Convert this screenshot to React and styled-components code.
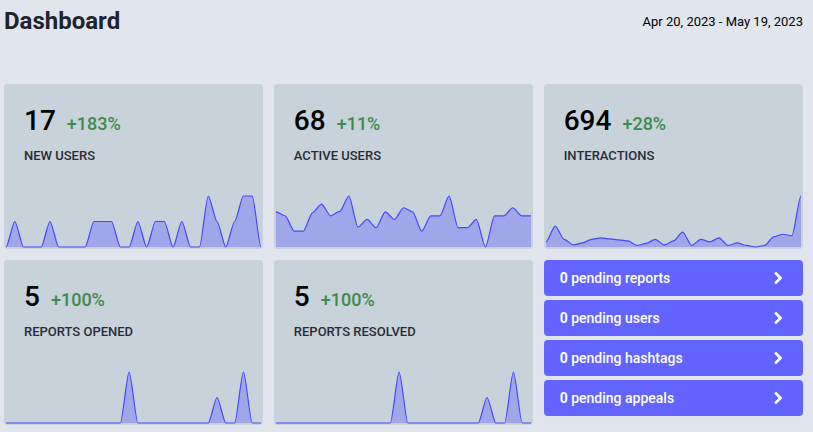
import React from 'react'
import styled, { createGlobalStyle } from 'styled-components'

const GlobalStyle = createGlobalStyle`
  body {
    margin: 0;
    background: #e1e6ee;
    font-family: Roboto, "Liberation Sans", sans-serif;
  }
`;

const counters = [
  {
    total: '17', change: '+183%', label: 'New users',
    data: [0,1,0,0,0,1,0,0,0,0,1,1,1,0,0,1,0,1,1,0,1,0,0,2,1,0,1,2,2,0],
  },
  {
    total: '68', change: '+11%', label: 'Active users',
    data: [69,61,31,31,67,84,61,70,100,39,54,38,69,54,77,69,31,61,61,100,38,38,54,0,61,61,77,61,61],
  },
  {
    total: '694', change: '+28%', label: 'Interactions',
    data: [10,41,15,4,8,15,18,16,14,12,3,7,15,4,12,29,3,15,10,18,3,8,3,0,3,20,25,22,100],
  },
  {
    total: '5', change: '+100%', label: 'Reports opened',
    data: [0,0,0,0,0,0,0,0,0,0,0,0,0,0,2,0,0,0,0,0,0,0,0,0,1,0,0,2,0,0],
  },
  {
    total: '5', change: '+100%', label: 'Reports resolved',
    data: [0,0,0,0,0,0,0,0,0,0,0,0,0,0,2,0,0,0,0,0,0,0,0,0,1,0,0,2,0,0],
  },
];

const pending = ['reports', 'users', 'hashtags', 'appeals'];

const WIDTH = 259;
const HEIGHT = 55;
const MARGIN = 2;

// same curve as react-sparklines' SparklinesCurve (divisor .25)
function buildPaths(data) {
  const max = Math.max(...data);
  const min = Math.min(...data);
  const vfactor = (HEIGHT - MARGIN * 2) / (max - min || 2);
  const hfactor = (WIDTH - MARGIN * 2) / (data.length - 1);
  const pts = data.map((d, i) => ({
    x: i * hfactor + MARGIN,
    y: (max === min ? 1 : max - d) * vfactor + MARGIN,
  }));
  let line = `M${pts[0].x} ${pts[0].y}`;
  for (let i = 1; i < pts.length; i++) {
    const prev = pts[i - 1];
    const p = pts[i];
    const len = (p.x - prev.x) * 0.25;
    line += ` C${prev.x + len} ${prev.y} ${p.x - len} ${p.y} ${p.x} ${p.y}`;
  }
  const last = pts[pts.length - 1];
  const fill = `${line} L${last.x} ${HEIGHT - MARGIN} L${MARGIN} ${HEIGHT - MARGIN} Z`;
  return { line, fill };
}

function Sparkline({ data }) {
  const { line, fill } = buildPaths(data);
  return (
    <Graph width={WIDTH} height={HEIGHT} viewBox={`0 0 ${WIDTH} ${HEIGHT}`}>
      <path d={fill} fill="rgba(99, 100, 255, 0.4)" stroke="none" />
      <path d={line} fill="none" stroke="#4547ff" strokeWidth="1.2" />
    </Graph>
  );
}

function Counter({ total, change, label, data }) {
  return (
    <Card>
      <Value>
        <Total>{total}</Total>
        <Change>{change}</Change>
      </Value>
      <Label>{label}</Label>
      <Sparkline data={data} />
    </Card>
  );
}

function Chevron() {
  return (
    <svg width="9" height="12" viewBox="0 0 9 12">
      <polyline points="2,1.5 6.5,6 2,10.5" fill="none" stroke="#fff" strokeWidth="2.6" strokeLinecap="square" strokeLinejoin="miter" />
    </svg>
  );
}

function App() {
  return (
    <Page>
      <GlobalStyle />
      <Header>
        <Title>Dashboard</Title>
        <Range>Apr 20, 2023 - May 19, 2023</Range>
      </Header>
      <Grid>
        {counters.slice(0, 3).map((c) => <Counter key={c.label} {...c} />)}
        {counters.slice(3).map((c) => <Counter key={c.label} {...c} />)}
        <PendingList>
          {pending.map((p) => (
            <PendingButton key={p}>
              <span><strong>0</strong> pending {p}</span>
              <Chevron />
            </PendingButton>
          ))}
        </PendingList>
      </Grid>
    </Page>
  );
}

export default App;

const Page = styled.div`
  padding: 7px 10px 0 4px;
  width: 799px;
`;

const Header = styled.div`
  display: flex;
  align-items: center;
  justify-content: space-between;
  margin-bottom: 49px;
`;

const Title = styled.h1`
  margin: 0;
  font-size: 24px;
  font-weight: 700;
  color: #1f232b;
`;

const Range = styled.div`
  font-size: 13px;
  color: #000;
`;

const Grid = styled.div`
  display: grid;
  grid-template-columns: repeat(3, 1fr);
  column-gap: 10.5px;
  row-gap: 11px;
  align-items: start;
`;

const Card = styled.div`
  display: flex;
  flex-direction: column;
  background: #c7d2da;
  border-radius: 4px;
  overflow: hidden;
`;

const Value = styled.div`
  display: flex;
  align-items: flex-end;
  line-height: 33px;
  padding: 20px 20px 0;
`;

const Total = styled.span`
  font-size: 28px;
  font-weight: 500;
  color: #000;
  margin-right: 11px;
`;

const Change = styled.span`
  font-size: 18px;
  font-weight: 500;
  color: #3d8b4f;
  margin-bottom: -3px;
`;

const Label = styled.div`
  padding: 11px 20px 0;
  margin-bottom: 31px;
  font-size: 13px;
  font-weight: 500;
  text-transform: uppercase;
  color: #282c37;
`;

const Graph = styled.svg`
  display: block;
`;

const PendingList = styled.div`
  display: flex;
  flex-direction: column;
  gap: 4px;
`;

const PendingButton = styled.a`
  display: flex;
  align-items: center;
  justify-content: space-between;
  height: 36px;
  padding: 0 20px 0 16px;
  background: #6364ff;
  border-radius: 4px;
  color: #fff;
  font-size: 14px;
  font-weight: 500;
  text-decoration: none;

  strong {
    font-weight: 700;
  }
`;
